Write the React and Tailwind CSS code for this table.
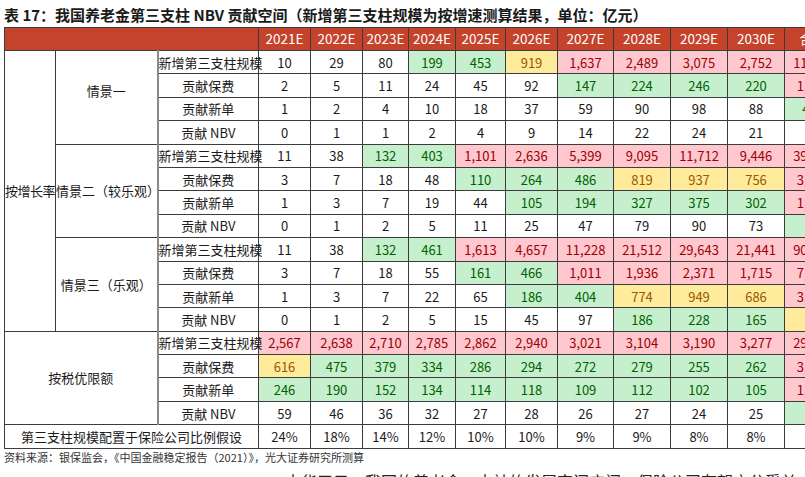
import React from 'react';

const TONES = {
    r: 'bg-[#ffc7ce] text-[#9c0006]',
    g: 'bg-[#c6efce] text-[#006100]',
    y: 'bg-[#ffeb9c] text-[#9c5700]',
    w: 'bg-white text-[#1a1a1a]',
};

const YEARS = ['2021E', '2022E', '2023E', '2024E', '2025E', '2026E', '2027E', '2028E', '2029E', '2030E', '合计'];

// each value: tone letter + value (w = plain)
const growth = [
    {
        name: '情景一',
        pad: true,
        rows: [
            ['新增第三支柱规模', 'w10 w29 w80 g199 g453 y919 r1,637 r2,489 r3,075 r2,752 r11,643'],
            ['贡献保费', 'w2 w5 w11 w24 w45 w92 g147 g224 g246 g220 r1,016'],
            ['贡献新单', 'w1 w2 w4 w10 w18 w37 w59 w90 w98 w88 g407'],
            ['贡献 NBV', 'w0 w1 w1 w2 w4 w9 w14 w22 w24 w21 w98'],
        ],
    },
    {
        name: '情景二（较乐观）',
        rows: [
            ['新增第三支柱规模', 'w11 w38 g132 g403 r1,101 r2,636 r5,399 r9,095 r11,712 r9,446 r39,973'],
            ['贡献保费', 'w3 w7 w18 w48 g110 g264 g486 y819 y937 y756 r3,448'],
            ['贡献新单', 'w1 w3 w7 w19 w44 g105 g194 g327 g375 g302 r1,377'],
            ['贡献 NBV', 'w0 w1 w2 w5 w11 w25 w47 w79 w90 w73 g33'],
        ],
    },
    {
        name: '情景三（乐观）',
        rows: [
            ['新增第三支柱规模', 'w11 w38 g132 g461 r1,613 r4,657 r11,228 r21,512 r29,643 r21,441 r90,736'],
            ['贡献保费', 'w3 w7 w18 w55 g161 g466 r1,011 r1,936 r2,371 r1,715 r7,743'],
            ['贡献新单', 'w1 w3 w7 w22 w65 g186 g404 y774 y949 y686 r3,097'],
            ['贡献 NBV', 'w0 w1 w2 w5 w15 w45 w97 g186 g228 g165 y74'],
        ],
    },
];

const taxRows = [
    ['新增第三支柱规模', 'r2,567 r2,638 r2,710 r2,785 r2,862 r2,940 r3,021 r3,104 r3,190 r3,277 r29,094'],
    ['贡献保费', 'y616 g475 g379 g334 g286 g294 g272 g279 g255 g262 r3,452'],
    ['贡献新单', 'g246 g190 g152 g134 g114 g118 g109 g112 g102 g105 r1,382'],
    ['贡献 NBV', 'w59 w46 w36 w32 w27 w28 w26 w27 w24 w25 g33'],
];

const cellBase = 'border border-[#3c3c3c] text-center p-0 leading-none whitespace-nowrap';

const Values = ({ spec }) =>
    spec.split(' ').map((v, i) => (
        <td key={i} className={`${cellBase} ${TONES[v[0]]}`}>{v.slice(1)}</td>
    ));

const App = () => {
    return (
        <div className="w-[805px] h-[477px] overflow-hidden bg-white text-[#1a1a1a] font-['Noto_Sans_CJK_SC','Noto_Sans',sans-serif]">
            <div className="h-[27px] pl-[4px] pt-[5px] text-[15px] font-bold leading-[20px] whitespace-nowrap">
                表 17：我国养老金第三支柱 NBV 贡献空间（新增第三支柱规模为按增速测算结果，单位：亿元）
            </div>

            <table className="ml-[4px] w-[837px] table-fixed border-collapse text-[13px]">
                <colgroup>
                    <col className="w-[51px]" />
                    <col className="w-[102px]" />
                    <col className="w-[101px]" />
                    <col className="w-[52px]" />
                    <col className="w-[52px]" />
                    <col className="w-[46px]" />
                    <col className="w-[47px]" />
                    <col className="w-[50px]" />
                    <col className="w-[52px]" />
                    <col className="w-[56px]" />
                    <col className="w-[57px]" />
                    <col className="w-[57px]" />
                    <col className="w-[57px]" />
                    <col className="w-[57px]" />
                </colgroup>
                <thead>
                    <tr className="h-[23px] bg-[#c5432a] text-white">
                        <th colSpan={3} className="border border-[#3c3c3c] p-0"></th>
                        {YEARS.map(y => (
                            <th key={y} className="border border-[#3c3c3c] p-0 font-normal leading-none text-[13.5px]">{y}</th>
                        ))}
                    </tr>
                </thead>
                <tbody>
                    {growth.map((g, gi) =>
                        g.rows.map((r, ri) => (
                            <tr key={`${gi}-${ri}`} className="h-[23.4px]">
                                {gi === 0 && ri === 0 && (
                                    <td rowSpan={12} className={`${cellBase} bg-white overflow-hidden tracking-[-0.5px]`}>按增长率</td>
                                )}
                                {ri === 0 && (
                                    <td rowSpan={4} className={`${cellBase} bg-white ${g.pad ? 'pb-[14px]' : ''}`}>{g.name}</td>
                                )}
                                <td className={`${cellBase} bg-white border-l-2 border-l-[#8a8a8a]`}>{r[0]}</td>
                                <Values spec={r[1]} />
                            </tr>
                        ))
                    )}
                    {taxRows.map((r, ri) => (
                        <tr key={`t-${ri}`} className="h-[23.4px]">
                            {ri === 0 && (
                                <td rowSpan={4} colSpan={2} className={`${cellBase} bg-white`}>按税优限额</td>
                            )}
                            <td className={`${cellBase} bg-white border-l-2 border-l-[#8a8a8a]`}>{r[0]}</td>
                            <Values spec={r[1]} />
                        </tr>
                    ))}
                    <tr className="h-[23.4px]">
                        <td colSpan={3} className={`${cellBase} bg-white`}>第三支柱规模配置于保险公司比例假设</td>
                        {['24%', '18%', '14%', '12%', '10%', '10%', '9%', '9%', '8%', '8%', ''].map((v, i) => (
                            <td key={i} className={`${cellBase} bg-white`}>{v}</td>
                        ))}
                    </tr>
                </tbody>
            </table>

            <div className="pl-[4px] pt-[1px] text-[11px] leading-[15px] text-[#333] whitespace-nowrap">
                资料来源：银保监会，《中国金融稳定报告（2021）》，光大证券研究所测算
            </div>

            <div className="pl-[285px] pt-[5px] text-[16px] leading-[22px] text-[#222] whitespace-nowrap">
                大华三只，我国的养老金，大社的发展空间广阔，保险公司有望充分受益
            </div>
        </div>
    );
};

export default App;
